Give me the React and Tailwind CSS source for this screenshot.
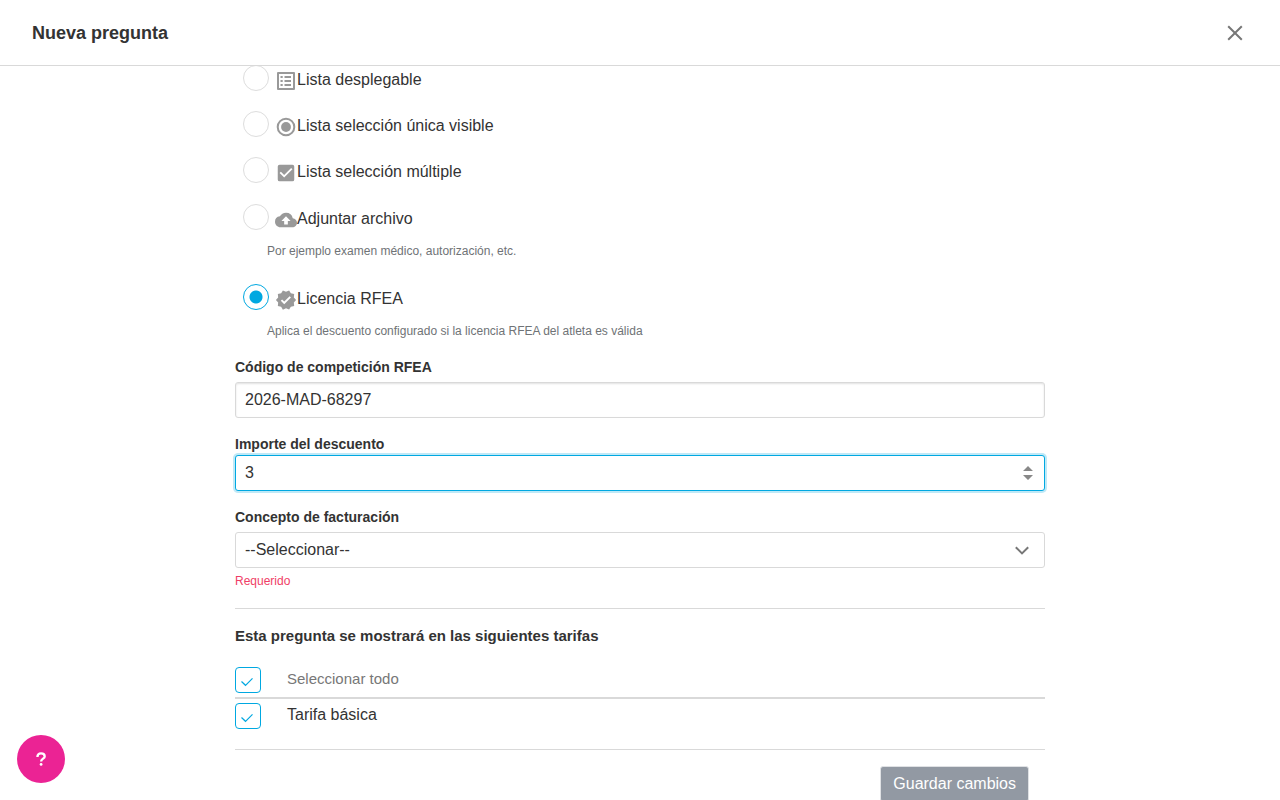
import { useState } from 'react'
import { MdCheckBox, MdBackup, MdVerified } from 'react-icons/md'

function ListIcon({ size, className }) {
    return (
        <svg viewBox="0 0 22 22" width={size} height={size} className={className} fill="currentColor">
            <path fillRule="evenodd" d="M3 2h16a1 1 0 0 1 1 1v16a1 1 0 0 1-1 1H3a1 1 0 0 1-1-1V3a1 1 0 0 1 1-1zM4 4v14h14V4z" />
            <path d="M5.5 6h2.2v2H5.5zM5.5 10h2.2v2H5.5zM5.5 14h2.2v2H5.5zM9.5 6H16v2H9.5zM9.5 10H16v2H9.5zM9.5 14H16v2H9.5z" />
        </svg>
    )
}

function RadioIcon({ size, className }) {
    return (
        <svg viewBox="0 0 22 22" width={size} height={size} className={className} fill="currentColor">
            <circle cx="11" cy="11" r="8.3" fill="none" stroke="currentColor" strokeWidth="2" />
            <circle cx="11" cy="11" r="4.9" />
        </svg>
    )
}

const QUESTION_TYPES = [
    { id: 'select', label: 'Lista desplegable', icon: ListIcon },
    { id: 'single', label: 'Lista selección única visible', icon: RadioIcon },
    { id: 'multiple', label: 'Lista selección múltiple', icon: MdCheckBox },
]

const EXTRA_TYPES = [
    { id: 'file', label: 'Adjuntar archivo', icon: MdBackup, hint: 'Por ejemplo examen médico, autorización, etc.' },
    { id: 'rfea', label: 'Licencia RFEA', icon: MdVerified, hint: 'Aplica el descuento configurado si la licencia RFEA del atleta es válida' },
]

const FIELD = 'block w-full h-9 rounded-[3px] border px-[9px] text-base text-[#333] bg-white outline-none appearance-none'

function TypeOption({ type, checked, onChange }) {
    const Icon = type.icon

    return (
        <div>
            <div className="flex h-[26px] items-center">
                <input
                    type="radio"
                    name="question-type"
                    id={`type-${type.id}`}
                    checked={checked}
                    onChange={() => onChange(type.id)}
                    className="h-[26px] w-[26px] shrink-0 appearance-none rounded-full border border-[#ddd] bg-white checked:border-[#00a8e1] checked:bg-[radial-gradient(circle,#00a8e1_6px,transparent_7px)]"
                />
                <label htmlFor={`type-${type.id}`} className="flex items-center pl-1.5 pt-1 text-base leading-6">
                    <Icon size={22} className="mt-0.5 shrink-0 text-[#999]" />
                    {type.label}
                </label>
            </div>
            {type.hint && <p className="mt-3 pl-6 text-xs leading-[18px] text-[#6f7376]">{type.hint}</p>}
        </div>
    )
}

function RateCheckbox({ id, checked, onChange, children }) {
    return (
        <div className="flex items-center gap-[26px]">
            <div className="grid shrink-0">
                <input
                    type="checkbox"
                    id={id}
                    checked={checked}
                    onChange={onChange}
                    className="col-start-1 row-start-1 h-[26px] w-[26px] appearance-none rounded-[4px] border border-[#ddd] bg-white checked:border-[#00a8e1]"
                />
                {checked && (
                    <svg viewBox="0 0 26 26" className="pointer-events-none col-start-1 row-start-1 h-[26px] w-[26px]" fill="none" stroke="#00a8e1" strokeWidth="1.2">
                        <path d="M6.5 14.5l4 3.8 7-7" />
                    </svg>
                )}
            </div>
            <label htmlFor={id} className="pb-0.5 leading-5">{children}</label>
        </div>
    )
}

export default function App() {
    const [type, setType] = useState('rfea')
    const [code, setCode] = useState('2026-MAD-68297')
    const [discount, setDiscount] = useState('3')
    const [concept, setConcept] = useState('')
    const [basic, setBasic] = useState(true)

    return (
        <div className="flex h-screen flex-col bg-white font-['Liberation_Sans',Arial,sans-serif] text-[#333]">
            <header className="relative z-10 flex h-[65px] shrink-0 items-center justify-between px-8 shadow-[0_1px_0_#d9d9d9]">
                <h1 className="text-lg font-bold">Nueva pregunta</h1>
                <button type="button" aria-label="Cerrar" className="flex h-[26px] w-[26px] items-center justify-center">
                    <svg viewBox="0 0 16 16" className="h-4 w-4" fill="none" stroke="#777" strokeWidth="2">
                        <path d="M1.2 1.2l13.6 13.6M14.8 1.2L1.2 14.8" />
                    </svg>
                </button>
            </header>

            <main className="min-h-0 flex-1 overflow-y-auto px-6 [scrollbar-width:none]">
                <form className="mx-auto max-w-[810px]" onSubmit={(e) => e.preventDefault()}>
                    <div className="flex flex-col gap-5 px-2">
                        {QUESTION_TYPES.map(t => (
                            <TypeOption key={t.id} type={t} checked={type === t.id} onChange={setType} />
                        ))}
                    </div>
                    <div className="flex flex-col gap-6 px-2 pt-[21px]">
                        {EXTRA_TYPES.map(t => (
                            <TypeOption key={t.id} type={t} checked={type === t.id} onChange={setType} />
                        ))}
                    </div>

                    <label htmlFor="code" className="mt-4 block pb-1 text-sm leading-[22px] font-bold">Código de competición RFEA</label>
                    <input
                        id="code"
                        type="text"
                        value={code}
                        onChange={(e) => setCode(e.target.value)}
                        className={`${FIELD} border-[#d9d9d9] shadow-[inset_0_1px_2px_rgba(0,0,0,0.12)]`}
                    />

                    <label htmlFor="discount" className="mt-4 block text-sm leading-[21px] font-bold">Importe del descuento</label>
                    <div className="relative">
                        <input
                            id="discount"
                            type="number"
                            value={discount}
                            onChange={(e) => setDiscount(e.target.value)}
                            className={`${FIELD} border-[#00a8e1] shadow-[0_0_0_2px_#bfe9f7] [&::-webkit-inner-spin-button]:appearance-none`}
                        />
                        <svg viewBox="0 0 10 14" className="pointer-events-none absolute top-[11px] right-3 h-3.5 w-2.5" fill="#888">
                            <path d="M5 0l5 5H0zM5 14l5-5H0z" />
                        </svg>
                    </div>

                    <label htmlFor="concept" className="mt-4 block pb-1 text-sm leading-[21px] font-bold">Concepto de facturación</label>
                    <div className="relative">
                        <select
                            id="concept"
                            value={concept}
                            onChange={(e) => setConcept(e.target.value)}
                            className={`${FIELD} border-[#d9d9d9]`}
                        >
                            <option value="">--Seleccionar--</option>
                        </select>
                        <svg viewBox="0 0 14 9" className="pointer-events-none absolute top-3.5 right-4 h-[9px] w-3.5" fill="none" stroke="#777" strokeWidth="2">
                            <path d="M0.8 1.2l6.2 6.2 6.2-6.2" />
                        </svg>
                    </div>
                    <p className="mt-1 text-xs leading-[18px] text-[#ef3e66]">Requerido</p>

                    <section className="mt-[18px] border-y border-[#d9d9d9] pt-4 pb-5">
                        <h2 className="mb-5 text-[15px] leading-[22px] font-bold">Esta pregunta se mostrará en las siguientes tarifas</h2>
                        <div className="border-b-2 border-[#d9d9d9] pb-1">
                            <RateCheckbox id="all" checked={basic} onChange={() => setBasic(!basic)}>
                                <span className="text-[15px] text-[#777]">Seleccionar todo</span>
                            </RateCheckbox>
                        </div>
                        <div className="pt-1">
                            <RateCheckbox id="basic" checked={basic} onChange={() => setBasic(!basic)}>
                                Tarifa básica
                            </RateCheckbox>
                        </div>
                    </section>

                    <div className="flex justify-end px-4 pt-4">
                        <button type="submit" className="h-9 rounded-[3px] border border-[#dfe1e4] bg-[#9299a3] px-3 text-base text-white">
                            Guardar cambios
                        </button>
                    </div>
                </form>
            </main>

            <button type="button" aria-label="Ayuda" className="fixed bottom-[17px] left-[17px] z-20 flex h-12 w-12 items-center justify-center rounded-full bg-[#eb2394] text-white">
                <svg viewBox="0 0 12 16" className="h-4 w-3" fill="none" stroke="currentColor" strokeWidth="2.3">
                    <path d="M2.4 6C2.4 3.7 3.8 2.4 6 2.4s3.7 1.2 3.7 3c0 2.3-3.6 2.3-3.6 5.2" />
                    <circle cx="6.1" cy="13.4" r="1.4" fill="currentColor" stroke="none" />
                </svg>
            </button>
        </div>
    )
}
